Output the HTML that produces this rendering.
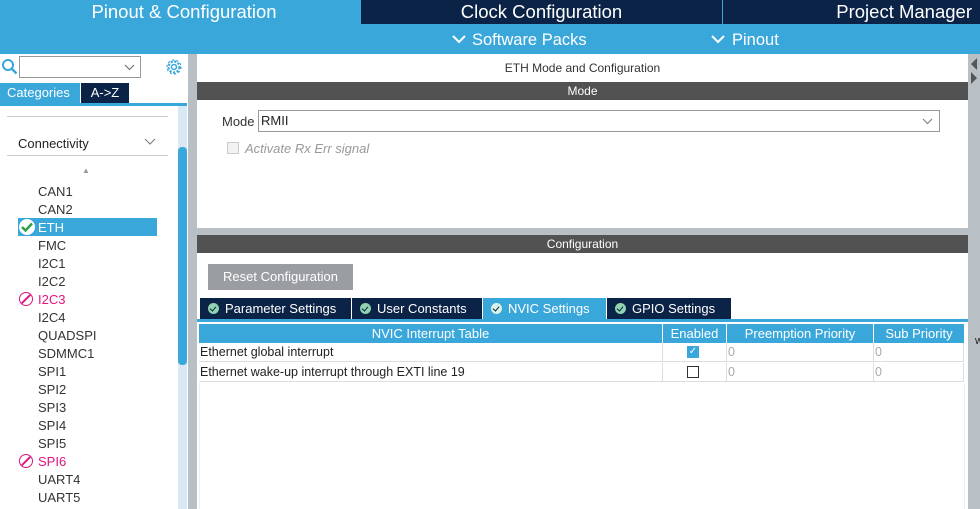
<!DOCTYPE html>
<html><head><style>
*{margin:0;padding:0;box-sizing:border-box}
body{width:980px;height:509px;overflow:hidden;background:#fff;font-family:"Liberation Sans",sans-serif;position:relative;font-size:13px;color:#222}
.a{position:absolute}
.top{color:#fff;font-size:18.5px;text-align:center;line-height:23px}
.li{position:absolute;left:38px;font-size:13px;color:#333}
.pk{color:#e0157e}
.hd{background:#525252;color:#fff;text-align:center;font-size:12px;line-height:18px}
.tab{position:absolute;top:298px;height:21px;background:#0b2346;color:#fff;font-size:13px;line-height:21px;padding-left:8px}
.tab i{display:inline-block;width:11px;height:11px;border-radius:50%;background:#8fd3b0;vertical-align:-1px;margin-right:6px;position:relative}
.tab i:after{content:"";position:absolute;left:3px;top:2px;width:3px;height:5px;border:solid #0b2346;border-width:0 1.5px 1.5px 0;transform:rotate(40deg)}
.th{position:absolute;top:324px;height:19px;background:#3aa7db;color:#fff;font-size:13px;line-height:19px;text-align:center}
.td{position:absolute;height:19px;line-height:19px;font-size:12.5px;border-bottom:1px solid #ddd;border-right:1px solid #ddd}
.g{color:#aaa}
.no{position:absolute;left:19px;width:14px;height:14px;border:1.5px solid #e0157e;border-radius:50%;overflow:hidden}
.no:after{content:"";position:absolute;left:5px;top:-2px;width:1.5px;height:16px;background:#e0157e;transform:rotate(45deg)}
</style></head><body>
<div class="a" style="left:0;top:0;width:980px;height:54px;background:#3aa7db"></div>
<div class="a top" style="left:0;top:0;width:360px;padding-left:8px">Pinout &amp; Configuration</div>
<div class="a top" style="left:361px;top:0;width:361px;height:24px;background:#0b2346">Clock Configuration</div>
<div class="a top" style="left:723px;top:0;width:257px;height:24px;background:#0b2346;text-align:right;padding-right:8px">Project Manager</div>
<svg class="a" style="left:452px;top:34px" width="14" height="10"><path d="M1 2l6 6 6-6" stroke="#fff" stroke-width="2" fill="none"/></svg>
<div class="a" style="left:472px;top:31px;color:#fff;font-size:16.5px">Software Packs</div>
<svg class="a" style="left:711px;top:34px" width="14" height="10"><path d="M1 2l6 6 6-6" stroke="#fff" stroke-width="2" fill="none"/></svg>
<div class="a" style="left:732px;top:31px;color:#fff;font-size:16.5px">Pinout</div>
<!-- left panel -->
<svg class="a" style="left:1px;top:58px" width="18" height="18"><circle cx="7" cy="7" r="5" stroke="#3aa7db" stroke-width="2" fill="none"/><path d="M10.5 10.5l5 5" stroke="#3aa7db" stroke-width="2.5"/></svg>
<div class="a" style="left:19px;top:56px;width:122px;height:22px;border:1px solid #999;background:#fff"><svg style="position:absolute;right:5px;top:7px" width="11" height="7"><path d="M1 1l4.5 4.5 4.5-4.5" stroke="#666" fill="none"/></svg></div>
<svg class="a" style="left:165px;top:58px" width="18" height="18" viewBox="0 0 18 18"><circle cx="9" cy="9" r="5.5" stroke="#3aa7db" stroke-width="2.2" fill="none" stroke-dasharray="2.2 1.5"/><circle cx="9" cy="9" r="2.5" stroke="#3aa7db" stroke-width="1.5" fill="none"/><circle cx="9" cy="9" r="7" stroke="#3aa7db" stroke-width="1.2" fill="none" stroke-dasharray="2 2.4"/></svg>
<div class="a" style="left:0;top:83px;width:80px;height:20px;background:#3aa7db;color:#fff;font-size:13px;line-height:20px;padding-left:7px">Categories</div>
<div class="a" style="left:81px;top:83px;width:48px;height:20px;background:#0b2346;color:#fff;font-size:13px;line-height:20px;text-align:center">A-&gt;Z</div>
<div class="a" style="left:0;top:103px;width:187px;height:3px;background:#3aa7db"></div>
<div class="a" style="left:7px;top:116px;width:161px;height:1px;background:#ccc"></div>
<div class="a" style="left:18px;top:136px;font-size:13px;color:#222">Connectivity</div>
<svg class="a" style="left:144px;top:138px" width="12" height="8"><path d="M1 1l5 5 5-5" stroke="#777" fill="none"/></svg>
<div class="a" style="left:7px;top:155px;width:161px;height:1px;background:#ccc"></div>
<div class="a" style="left:82px;top:166px;color:#999;font-size:8px">▲</div>
<div class="a" style="left:18px;top:218px;width:139px;height:18px;background:#3aa7db"></div>
<div class="a" style="left:19px;top:219px;width:16px;height:16px;border-radius:50%;background:#fff"><svg style="position:absolute;left:2px;top:3px" width="12" height="10"><path d="M1 5l3.5 3.5 6.5-7" stroke="#2ca04b" stroke-width="2.5" fill="none"/></svg></div>
<div class="li" style="top:184px">CAN1</div>
<div class="li" style="top:202px">CAN2</div>
<div class="li" style="top:220px;color:#fff">ETH</div>
<div class="li" style="top:238px">FMC</div>
<div class="li" style="top:256px">I2C1</div>
<div class="li" style="top:274px">I2C2</div>
<div class="li pk" style="top:292px">I2C3</div>
<div class="li" style="top:310px">I2C4</div>
<div class="li" style="top:328px">QUADSPI</div>
<div class="li" style="top:346px">SDMMC1</div>
<div class="li" style="top:364px">SPI1</div>
<div class="li" style="top:382px">SPI2</div>
<div class="li" style="top:400px">SPI3</div>
<div class="li" style="top:418px">SPI4</div>
<div class="li" style="top:436px">SPI5</div>
<div class="li pk" style="top:454px">SPI6</div>
<div class="li" style="top:472px">UART4</div>
<div class="li" style="top:490px">UART5</div>
<div class="no" style="top:292px"></div>
<div class="no" style="top:454px"></div>
<div class="a" style="left:178px;top:106px;width:9px;height:403px;background:#d8e8f5"></div>
<div class="a" style="left:178px;top:147px;width:9px;height:218px;background:#3aa7db;border-radius:4px"></div>
<div class="a" style="left:188px;top:54px;width:9px;height:455px;background:#b8c0c6"></div>
<!-- right -->
<div class="a" style="left:968px;top:54px;width:12px;height:455px;background:#b8c0c6"></div>
<svg class="a" style="left:969px;top:56px" width="10" height="30"><path d="M8 2L2 8l6 6z M2 16l6 6-6 6z" fill="#555"/></svg>
<div class="a" style="left:197px;top:61px;width:771px;text-align:center;font-size:12px;color:#333">ETH Mode and Configuration</div>
<div class="a hd" style="left:197px;top:82px;width:771px">Mode</div>
<div class="a" style="left:222px;top:114px;font-size:13px;color:#333">Mode</div>
<div class="a" style="left:258px;top:110px;width:682px;height:22px;border:1px solid #999;font-size:13px;line-height:20px;padding-left:2px">RMII<svg style="position:absolute;right:6px;top:7px" width="11" height="7"><path d="M1 1l4.5 4.5 4.5-4.5" stroke="#777" fill="none"/></svg></div>
<div class="a" style="left:227px;top:142px;width:12px;height:12px;border:1px solid #ccc;background:#f2f2f2"></div>
<div class="a" style="left:245px;top:141px;font-style:italic;color:#999;font-size:13px">Activate Rx Err signal</div>
<div class="a" style="left:197px;top:228px;width:771px;height:7px;background:#b8c0c6"></div>
<div class="a hd" style="left:197px;top:235px;width:771px">Configuration</div>
<div class="a" style="left:208px;top:264px;width:145px;height:26px;background:#9a9ea2;color:#fff;font-size:13px;line-height:26px;text-align:center">Reset Configuration</div>
<div class="tab" style="left:200px;width:151px"><i></i>Parameter Settings</div>
<div class="tab" style="left:352px;width:130px"><i></i>User Constants</div>
<div class="tab" style="left:483px;width:123px;background:#3aa7db"><i style="background:#d9f2e6"></i>NVIC Settings</div>
<div class="tab" style="left:607px;width:124px"><i></i>GPIO Settings</div>
<div class="a" style="left:197px;top:319px;width:771px;height:3px;background:#3aa7db"></div>
<div class="th" style="left:199px;width:463px">NVIC Interrupt Table</div>
<div class="th" style="left:663px;width:63px">Enabled</div>
<div class="th" style="left:727px;width:146px">Preemption Priority</div>
<div class="th" style="left:874px;width:90px">Sub Priority</div>
<div class="td" style="left:199px;top:343px;width:464px;padding-left:1px">Ethernet global interrupt</div>
<div class="td" style="left:663px;top:343px;width:64px"><span class="a" style="left:24px;top:3px;width:12px;height:12px;background:#3aa7db;color:#fff;font-size:10px;line-height:12px;text-align:center">✓</span></div>
<div class="td g" style="left:727px;top:343px;width:147px;padding-left:1px">0</div>
<div class="td g" style="left:874px;top:343px;width:90px;padding-left:1px">0</div>
<div class="td" style="left:199px;top:363px;width:464px;padding-left:1px">Ethernet wake-up interrupt through EXTI line 19</div>
<div class="td" style="left:663px;top:363px;width:64px"><span class="a" style="left:24px;top:3px;width:12px;height:12px;border:1px solid #333"></span></div>
<div class="td g" style="left:727px;top:363px;width:147px;padding-left:1px">0</div>
<div class="td g" style="left:874px;top:363px;width:90px;padding-left:1px">0</div>
<div class="a" style="left:199px;top:383px;width:766px;height:126px;border-left:1px solid #eee;border-right:1px solid #eee"></div>
<div class="a" style="left:975px;top:335px;font-size:11px">w</div>
</body></html>
